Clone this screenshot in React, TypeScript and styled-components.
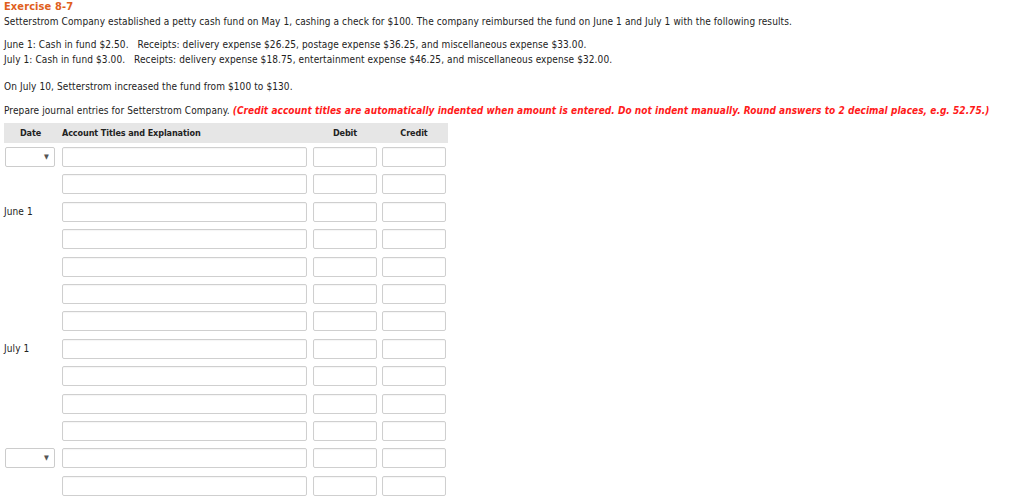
import React from "react";
import styled, { createGlobalStyle } from "styled-components";

const Global = createGlobalStyle`
  html, body { margin: 0; padding: 0; background: #fff; }
  body { font-family: "DejaVu Sans Condensed", "DejaVu Sans", sans-serif; font-size: 10px; letter-spacing: 0.1px; color: #222; }
`;

const Page = styled.div`
  padding: 1px 4px 0 4px;
`;

const Title = styled.div`
  color: #e0601d;
  font-weight: bold;
  font-size: 11px;
  line-height: 12px;
`;

const Para = styled.p<{ $mt?: number }>`
  margin: ${(p) => p.$mt ?? 0}px 0 0 0;
  line-height: 15px;
  white-space: pre;
`;

const Note = styled.span`
  color: #ff1a1a;
  font-weight: bold;
  font-style: italic;
  letter-spacing: 0.05px;
`;

const Table = styled.div`
  margin-top: 5px;
  width: 444px;
`;

const Header = styled.div`
  display: grid;
  grid-template-columns: 58px 251px 69px 66px;
  height: 20px;
  align-items: center;
  background: #e6e6e6;
  font-weight: bold;
  font-size: 9px;
  letter-spacing: -0.1px;
  color: #222;
`;

const HCell = styled.div<{ $align?: string; $pr?: number }>`
  text-align: ${(p) => p.$align ?? "center"};
  padding-right: ${(p) => p.$pr ?? 0}px;
`;

const Rows = styled.div`
  display: flex;
  flex-direction: column;
  gap: 7.4px;
  margin-top: 4px;
`;

const Row = styled.div`
  display: grid;
  grid-template-columns: 58px 251px 69px 64px;
  height: 20px;
  align-items: center;
`;

const Select = styled.div`
  margin-left: 1px;
  width: 50px;
  height: 20px;
  box-sizing: border-box;
  border: 1px solid #ccc;
  border-radius: 2px;
  background: #fff;
  display: flex;
  align-items: center;
  justify-content: flex-end;
  padding-right: 5px;
  font-size: 7px;
  color: #555;
`;

const Label = styled.span`
  color: #222;
`;

const Input = styled.div<{ $w: number }>`
  width: ${(p) => p.$w}px;
  height: 20px;
  box-sizing: border-box;
  border: 1px solid #cfcfcf;
  border-radius: 2px;
  background: #fff;
  box-shadow: inset 0 1px 1px rgba(0, 0, 0, 0.04);
`;

type R = { kind: "select" | "label" | "none"; text?: string };

const rows: R[] = [
  { kind: "select" },
  { kind: "none" },
  { kind: "label", text: "June 1" },
  { kind: "none" },
  { kind: "none" },
  { kind: "none" },
  { kind: "none" },
  { kind: "label", text: "July 1" },
  { kind: "none" },
  { kind: "none" },
  { kind: "none" },
  { kind: "select" },
  { kind: "none" },
];

export default function App() {
  return (
    <Page>
      <Global />
      <Title>Exercise 8-7</Title>
      <Para $mt={1}>
        Setterstrom Company established a petty cash fund on May 1, cashing a check for $100. The company reimbursed the fund on June 1 and July 1 with the following results.
      </Para>
      <Para $mt={8}>{"June 1: Cash in fund $2.50.   Receipts: delivery expense $26.25, postage expense $36.25, and miscellaneous expense $33.00."}</Para>
      <Para>{"July 1: Cash in fund $3.00.   Receipts: delivery expense $18.75, entertainment expense $46.25, and miscellaneous expense $32.00."}</Para>
      <Para $mt={12}>On July 10, Setterstrom increased the fund from $100 to $130.</Para>
      <Para $mt={9}>
        Prepare journal entries for Setterstrom Company.{" "}
        <Note>
          (Credit account titles are automatically indented when amount is entered. Do not indent manually. Round answers to 2 decimal places, e.g. 52.75.)
        </Note>
      </Para>
      <Table>
        <Header>
          <HCell $pr={5}>Date</HCell>
          <HCell $align="left">Account Titles and Explanation</HCell>
          <HCell $pr={5}>Debit</HCell>
          <HCell $pr={2}>Credit</HCell>
        </Header>
        <Rows>
          {rows.map((r, i) => (
            <Row key={i}>
              <div>
                {r.kind === "select" && <Select>▼</Select>}
                {r.kind === "label" && <Label>{r.text}</Label>}
              </div>
              <Input $w={245} />
              <Input $w={64} />
              <Input $w={64} />
            </Row>
          ))}
        </Rows>
      </Table>
    </Page>
  );
}
